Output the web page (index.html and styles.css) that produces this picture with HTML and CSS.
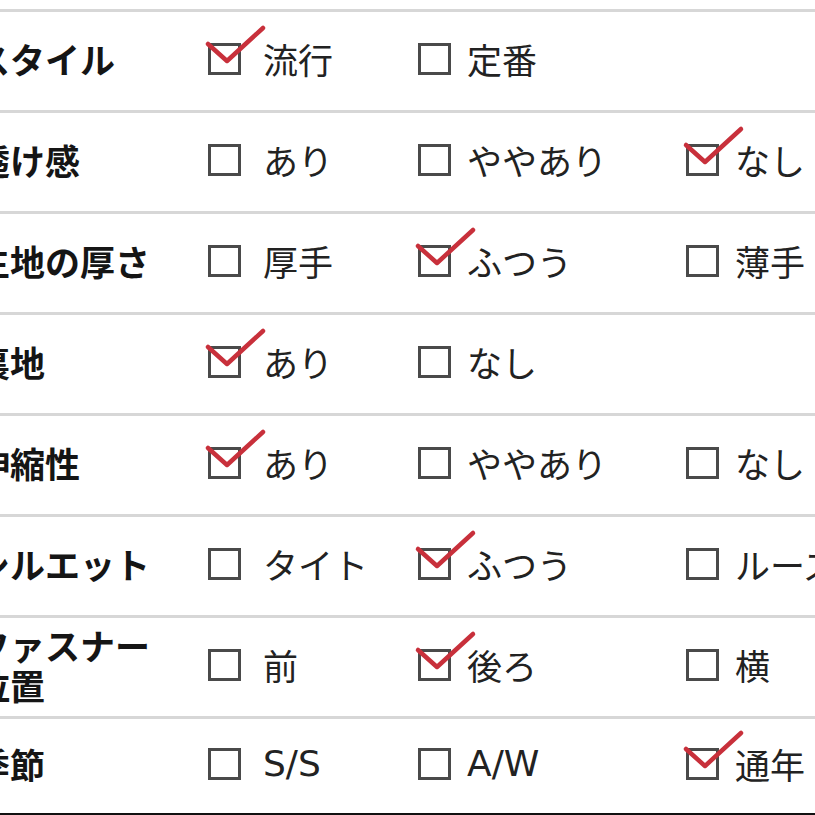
FILE: index.html
```html
<!DOCTYPE html>
<html lang="ja">
<head>
<meta charset="utf-8">
<title>スペック</title>
<link rel="stylesheet" href="styles.css">
</head>
<body>
<div class="spec">
  <div class="row">
    <div class="label">スタイル</div>
    <div class="opt c1"><span class="box on"><svg viewBox="0 0 62 44"><path d="M3 19 L22 36 L58 3"/></svg></span><span class="txt">流行</span></div>
    <div class="opt c2"><span class="box"></span><span class="txt">定番</span></div>
    <div class="opt c3"></div>
  </div>
  <div class="row">
    <div class="label">透け感</div>
    <div class="opt c1"><span class="box"></span><span class="txt">あり</span></div>
    <div class="opt c2"><span class="box"></span><span class="txt">ややあり</span></div>
    <div class="opt c3"><span class="box on"><svg viewBox="0 0 62 44"><path d="M3 19 L22 36 L58 3"/></svg></span><span class="txt">なし</span></div>
  </div>
  <div class="row">
    <div class="label">生地の厚さ</div>
    <div class="opt c1"><span class="box"></span><span class="txt">厚手</span></div>
    <div class="opt c2"><span class="box on"><svg viewBox="0 0 62 44"><path d="M3 19 L22 36 L58 3"/></svg></span><span class="txt">ふつう</span></div>
    <div class="opt c3"><span class="box"></span><span class="txt">薄手</span></div>
  </div>
  <div class="row">
    <div class="label">裏地</div>
    <div class="opt c1"><span class="box on"><svg viewBox="0 0 62 44"><path d="M3 19 L22 36 L58 3"/></svg></span><span class="txt">あり</span></div>
    <div class="opt c2"><span class="box"></span><span class="txt">なし</span></div>
    <div class="opt c3"></div>
  </div>
  <div class="row">
    <div class="label">伸縮性</div>
    <div class="opt c1"><span class="box on"><svg viewBox="0 0 62 44"><path d="M3 19 L22 36 L58 3"/></svg></span><span class="txt">あり</span></div>
    <div class="opt c2"><span class="box"></span><span class="txt">ややあり</span></div>
    <div class="opt c3"><span class="box"></span><span class="txt">なし</span></div>
  </div>
  <div class="row">
    <div class="label">シルエット</div>
    <div class="opt c1"><span class="box"></span><span class="txt">タイト</span></div>
    <div class="opt c2"><span class="box on"><svg viewBox="0 0 62 44"><path d="M3 19 L22 36 L58 3"/></svg></span><span class="txt">ふつう</span></div>
    <div class="opt c3"><span class="box"></span><span class="txt">ルーズ</span></div>
  </div>
  <div class="row">
    <div class="label">ファスナー<br>位置</div>
    <div class="opt c1"><span class="box"></span><span class="txt">前</span></div>
    <div class="opt c2"><span class="box on"><svg viewBox="0 0 62 44"><path d="M3 19 L22 36 L58 3"/></svg></span><span class="txt">後ろ</span></div>
    <div class="opt c3"><span class="box"></span><span class="txt">横</span></div>
  </div>
  <div class="row last">
    <div class="label">季節</div>
    <div class="opt c1"><span class="box"></span><span class="txt latin">S/S</span></div>
    <div class="opt c2"><span class="box"></span><span class="txt latin">A/W</span></div>
    <div class="opt c3"><span class="box on"><svg viewBox="0 0 62 44"><path d="M3 19 L22 36 L58 3"/></svg></span><span class="txt">通年</span></div>
  </div>
</div>
</body>
</html>
```

FILE: styles.css
```css
html, body {
  margin: 0;
  padding: 0;
  background: #ffffff;
  overflow: hidden;
  width: 815px;
  height: 815px;
}

.spec {
  margin-top: 9px;
  margin-left: -25px;
  width: 900px;
  font-family: "Noto Sans CJK JP", "Noto Sans", sans-serif;
  color: #222;
}

.row {
  display: grid;
  grid-template-columns: 233px 210px 268px 1fr;
  align-items: center;
  height: 101px;
  box-sizing: border-box;
  border-top: 3px solid #d7d7d7;
  padding-bottom: 4px;
  white-space: nowrap;
}

.row.last {
  height: 99px;
  border-bottom: 2px solid #111;
}

.label {
  font-size: 35px;
  font-weight: 700;
  color: #151515;
  line-height: 40px;
}

.opt {
  display: flex;
  align-items: center;
  font-size: 35px;
  line-height: 40px;
}

.box {
  position: relative;
  flex: none;
  width: 33px;
  height: 32px;
  box-sizing: border-box;
  border: 3px solid #4a4a4a;
}

.box svg {
  position: absolute;
  left: -6px;
  top: -21px;
  width: 62px;
  height: 44px;
  overflow: visible;
}

.box svg path {
  fill: none;
  stroke: #c8303b;
  stroke-width: 4.5;
  stroke-linecap: round;
  stroke-linejoin: round;
}

.latin {
  font-family: "DejaVu Sans", "Noto Sans", sans-serif;
  font-size: 36px;
}

.c1 .txt { margin-left: 22px; }
.c2 .txt { margin-left: 16px; }
.c3 .txt { margin-left: 16px; }
```
